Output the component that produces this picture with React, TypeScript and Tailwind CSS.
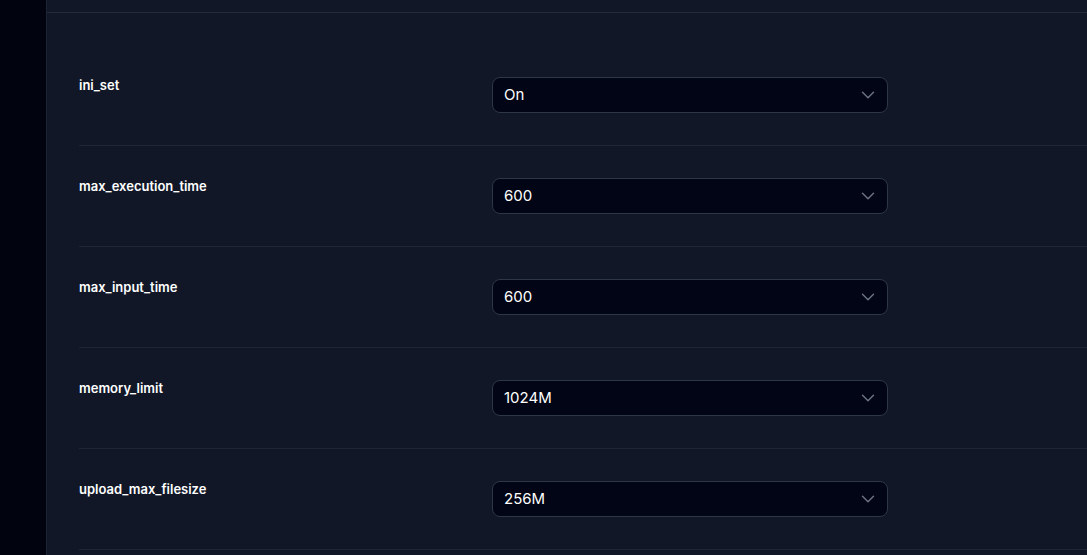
import { ChevronDown } from 'lucide-react'

const settings = [
  { name: 'ini_set', value: 'On' },
  { name: 'max_execution_time', value: '600' },
  { name: 'max_input_time', value: '600' },
  { name: 'memory_limit', value: '1024M' },
  { name: 'upload_max_filesize', value: '256M' },
]

function SettingRow({ name, value }: { name: string; value: string }) {
  return (
    <div className="flex items-start py-8 border-b border-[#1e2636]">
      <p className="w-[413px] shrink-0 text-[13px] leading-[16px] font-semibold text-white">{name}</p>
      <button className="w-[396px] h-[36px] shrink-0 flex items-center justify-between pl-[11px] pr-2 rounded-lg border border-[#2e3748] bg-[#020515] text-[15px] text-white">
        <span>{value}</span>
        <ChevronDown className="w-[22px] h-[22px] text-[#6b7280]" strokeWidth={1.6} />
      </button>
    </div>
  )
}

export default function App() {
  return (
    <div className="w-[1087px] h-[555px] flex overflow-hidden bg-[#111727]" style={{ fontFamily: 'Inter, "Noto Sans", sans-serif' }}>
      <div className="w-[47px] shrink-0 bg-[#01030f] border-r border-[#1c2433]" />

      <div className="flex-1 min-w-0 flex flex-col">
        <div className="h-[13px] shrink-0 border-b border-[#232b3a]" />
        <div className="pt-8 pl-8 w-[1200px]">
          {settings.map((s) => (
            <SettingRow key={s.name} name={s.name} value={s.value} />
          ))}
        </div>
      </div>
    </div>
  )
}
